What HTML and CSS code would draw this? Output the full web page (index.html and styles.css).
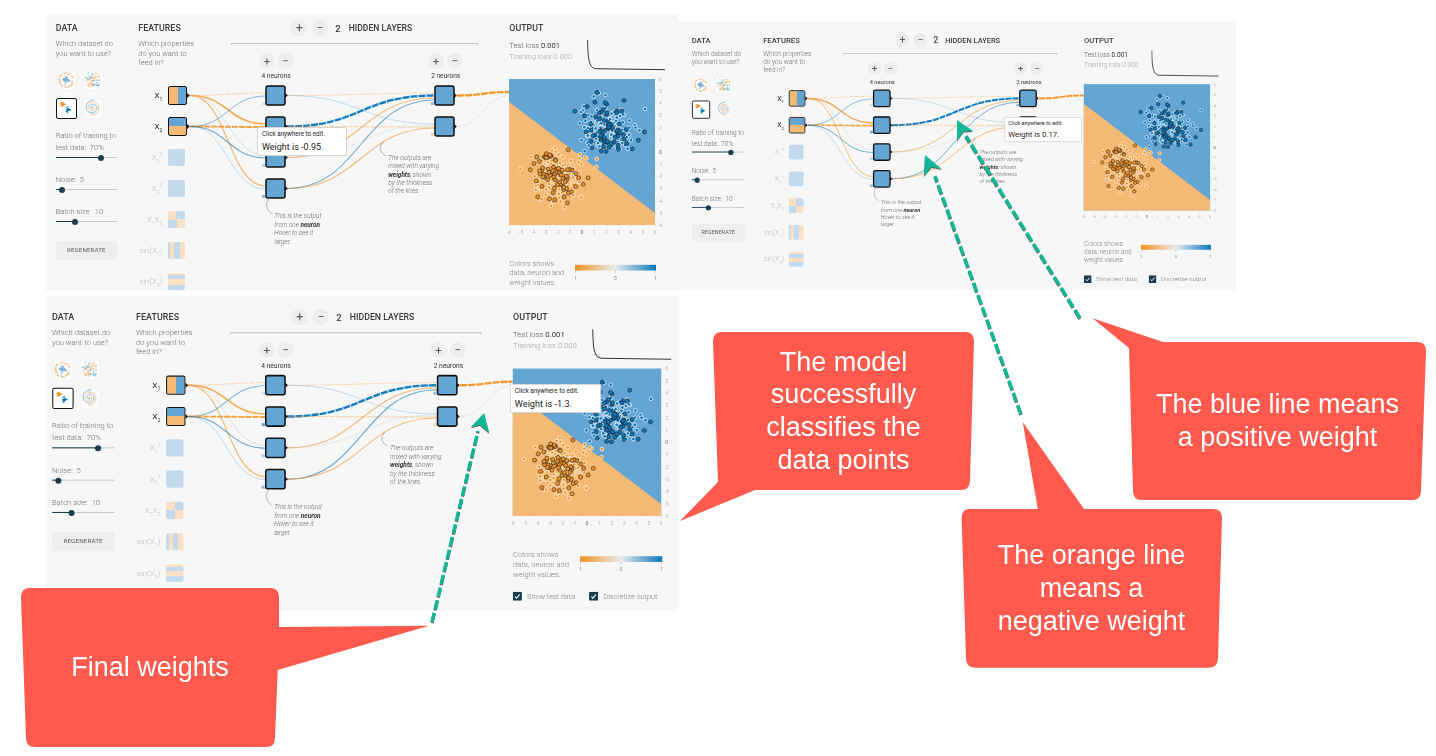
FILE: index.html
```html
<!DOCTYPE html>
<html lang="en">
<head>
<meta charset="utf-8">
<title>Neural network playground annotated</title>
<link rel="stylesheet" href="styles.css">
</head>
<body>
<main class="slide">
  <section class="panel panel-a" data-tip-small="Click anywhere to edit." data-tip="Weight is -0.95."></section>
  <section class="panel panel-c" data-tip-small="Click anywhere to edit." data-tip="Weight is 0.17."></section>
  <section class="panel panel-b" data-tip-small="Click anywhere to edit." data-tip="Weight is -1.3."></section>

  <svg class="art" viewBox="0 0 1436 756" width="1436" height="756" aria-hidden="true">
    <g class="bubbles">
      <path d="M722 332H965Q974 332 974 341L970 481Q969.5 490 961 490H755L680 521L718 482L713 341Q713 332 722 332Z"/>
      <path d="M1163 342H1417Q1426 342 1426 351L1421 491Q1421 500 1412 500H1142Q1133 500 1133 491L1129 348L1092.6 318.3Z"/>
      <path d="M1084 509H1213Q1222 509 1222 518L1218 658Q1218 667.7 1209 667.7H975Q966 667.7 966 658L961.6 518Q961.6 509 970 509H1037.8L1022.7 422Z"/>
      <path d="M30 588H270Q279 588 279 597V627L429 625.7L277.7 670L275 738Q275 747 266 747H35Q26 747 26 738L21 597Q21 588 30 588Z"/>
    </g>
    <g class="arrows">
      <line x1="1080" y1="318" x2="966" y2="136"/>
      <polygon points="957,120 973,131 963.5,131.5 957,141"/>
      <line x1="1021" y1="414" x2="935" y2="176"/>
      <polygon points="925,155 941.7,169 931.5,167 924,176"/>
      <line x1="432" y1="622" x2="478" y2="431"/>
      <polygon points="484,413 489.3,433 480,425 470.7,427.3"/>
    </g>
  </svg>

  <p class="callout callout-model">The model<br>successfully<br>classifies the<br>data points</p>
  <p class="callout callout-blue">The blue line means<br>a positive weight</p>
  <p class="callout callout-orange">The orange line<br>means a<br>negative weight</p>
  <p class="callout callout-final">Final weights</p>
</main>

<template id="board">
  <div class="board">
    <div class="col col-data">
      <h2 class="title">DATA</h2>
      <p class="desc">Which dataset do<br>you want to use?</p>
      <div class="thumbs">
        <svg class="thumb faded" viewBox="0 0 21 21" data-set="circle"></svg>
        <svg class="thumb faded" viewBox="0 0 21 21" data-set="xor"></svg>
        <svg class="thumb selected" viewBox="0 0 21 21" data-set="gauss"></svg>
        <svg class="thumb faded" viewBox="0 0 21 21" data-set="spiral"></svg>
      </div>
      <p class="param param-first">Ratio of training to<br>test data:&nbsp; 70%</p>
      <div class="slider s-ratio"><span class="fill"></span><span class="knob"></span></div>
      <p class="param">Noise:&nbsp; 5</p>
      <div class="slider s-noise"><span class="fill"></span><span class="knob"></span></div>
      <p class="param">Batch size:&nbsp; 10</p>
      <div class="slider s-batch"><span class="fill"></span><span class="knob"></span></div>
      <div class="regen">REGENERATE</div>
    </div>

    <div class="col col-features">
      <h2 class="title">FEATURES</h2>
      <p class="desc nowrap">Which properties<br>do you want to<br>feed in?</p>
      <ul class="features">
        <li class="feature on"><span class="flabel">X<sub>1</sub></span><span class="swatch sw-x1"></span></li>
        <li class="feature on"><span class="flabel">X<sub>2</sub></span><span class="swatch sw-x2"></span></li>
        <li class="feature"><span class="flabel">X<sub>1</sub><sup>2</sup></span><span class="swatch sw-sq"></span></li>
        <li class="feature"><span class="flabel">X<sub>2</sub><sup>2</sup></span><span class="swatch sw-sq"></span></li>
        <li class="feature"><span class="flabel">X<sub>1</sub>X<sub>2</sub></span><span class="swatch sw-xx"></span></li>
        <li class="feature"><span class="flabel">sin(X<sub>1</sub>)</span><span class="swatch sw-s1"></span></li>
        <li class="feature"><span class="flabel">sin(X<sub>2</sub>)</span><span class="swatch sw-s2"></span></li>
      </ul>
    </div>

    <div class="col col-net">
      <div class="layers">
        <span class="round">+</span>
        <span class="round">−</span>
        <strong class="count">2</strong>
        <span class="layers-name">HIDDEN LAYERS</span>
      </div>
      <div class="rule"></div>
      <svg class="net" viewBox="197 44 322 240" width="322" height="240">
        <g class="mini">
          <circle cx="277" cy="60.7" r="7.7"/><circle cx="295.5" cy="60.7" r="7.7"/>
          <circle cx="446" cy="60.7" r="7.7"/><circle cx="465" cy="60.7" r="7.7"/>
        </g>
        <g class="mini-sign">
          <text x="277" y="64.8">+</text><text x="295.5" y="64.8">−</text>
          <text x="446" y="64.8">+</text><text x="465" y="64.8">−</text>
        </g>
        <text class="neurons" x="286" y="78.4">4 neurons</text>
        <text class="neurons" x="455.7" y="78.4">2 neurons</text>
        <g class="links"></g>
        <g class="nodes"></g>
        <path class="pointer" d="M280 198Q272 206 281.5 214"/>
        <path class="pointer" d="M394 141Q385 150 396 156"/>
        <g class="note">
          <text x="284.3" y="218">This is the output</text>
          <text x="284.3" y="226.5">from one <tspan class="strong">neuron</tspan>.</text>
          <text x="284.3" y="235">Hover to see it</text>
          <text x="284.3" y="243.5">larger.</text>
          <text x="398.3" y="159.8">The outputs are</text>
          <text x="398.3" y="168.2">mixed with varying</text>
          <text x="398.3" y="176.6"><tspan class="strong">weights</tspan>, shown</text>
          <text x="398.3" y="185">by the thickness</text>
          <text x="398.3" y="193.4">of the lines.</text>
        </g>
      </svg>
    </div>

    <div class="col col-output">
      <h2 class="title">OUTPUT</h2>
      <div class="loss-row">
        <p class="loss"><span class="test">Test loss <b>0.001</b></span><br><span class="train">Training loss 0.000</span></p>
        <svg class="loss-chart" viewBox="597 40 78 31" width="78" height="31">
          <path d="M597.6 40C598 55 598 68.5 606 68.7L675 69.7"/>
        </svg>
      </div>
      <svg class="heat" viewBox="519 79 165 160" width="165" height="160">
        <rect class="h-blue" x="519" y="79" width="146" height="146"/>
        <polygon class="h-orange" points="519,101.7 665,213 665,225 519,225"/>
        <g class="axis"></g>
        <g class="dots"></g>
      </svg>
      <div class="legend">
        <p class="desc">Colors shows<br>data, neuron and<br>weight values.</p>
        <svg class="grad" viewBox="585 258.5 90 27" width="90" height="27">
          <defs>
            <linearGradient id="cmap"><stop offset="0" stop-color="#f59322"/><stop offset=".5" stop-color="#e8eaeb"/><stop offset="1" stop-color="#0877bd"/></linearGradient>
          </defs>
          <rect x="585" y="264.3" width="81" height="5.7" fill="url(#cmap)"/>
          <path class="gtick" d="M585.5 270v2M625.5 270v2M665.5 270v2"/>
          <text x="585" y="279">-1</text><text x="625.5" y="279">0</text><text x="665.5" y="279">1</text>
        </svg>
      </div>
      <div class="checks">
        <span class="check"><svg class="cbox" viewBox="0 0 9 9" width="9" height="9"><rect width="9" height="9" rx="1"/><path d="M2.3 4.9l1.5 1.4 3-3.6"/></svg>Show test data</span>
        <span class="check"><svg class="cbox" viewBox="0 0 9 9" width="9" height="9"><rect width="9" height="9" rx="1"/><path d="M2.3 4.9l1.5 1.4 3-3.6"/></svg>Discretize output</span>
      </div>
    </div>

    <div class="tip"><span class="tip-small"></span><span class="tip-big"></span></div>
  </div>
</template>
<script src="app.js"></script>
</body>
</html>
```

FILE: styles.css
```css
* { box-sizing: border-box; }
html, body { margin: 0; padding: 0; background: #fff; }
body { width: 1436px; height: 756px; overflow: hidden; font-family: Roboto, "Liberation Sans", sans-serif; }

.slide { position: relative; width: 1436px; height: 756px; }

/* panels sit on a free canvas, like pasted slides */
.panel { position: absolute; background: #f7f7f7; overflow: hidden; }
.panel-a { left: 46px; top: 14px; width: 632px; height: 277px; }
.panel-b { left: 46px; top: 296px; width: 632px; height: 315px; }
.panel-c { left: 678px; top: 21px; width: 558px; height: 269px; }

.board { position: relative; display: flex; width: 640px; height: 310px; transform-origin: 0 0; filter: blur(.3px); color: #555; }
.panel-b .board { transform: translate(-3.9px, 6.9px) scale(1.0166, 1.01); }
.panel-c .board { transform: translate(5.3px, 6.9px) scale(.865); }

.col { flex: none; }
.col-data { width: 92.3px; padding: 8px 0 0 9.7px; }
.col-features { width: 49px; padding-top: 8px; }
.col-net { width: 322px; padding-top: 6px; }
.col-output { width: 170px; padding-top: 8px; }

.title { margin: 0; font-size: 8.8px; line-height: 12px; font-weight: 500; color: #3a3a3a; letter-spacing: .05px; }
.desc { margin: 5px 0 0; font-size: 7.5px; line-height: 9.7px; font-weight: 300; color: #6e6e6e; }
.nowrap { white-space: nowrap; }

.thumbs { display: grid; grid-template-columns: 21px 21px; gap: 6.5px; margin-top: 11.6px; }
.thumb { display: block; width: 21px; height: 21px; background: #fff; border: 1px solid #eee; border-radius: 2px; }
.thumb.faded { opacity: .55; }
.thumb.selected { border: 1.6px solid #111; }

.param { margin: 12px 0 0; font-size: 7.5px; line-height: 12px; font-weight: 300; color: #6e6e6e; }
.param-first { margin-top: 11px; }

.slider { position: relative; width: 61px; height: 8px; }
.slider::before { content: ""; position: absolute; left: 0; right: 0; top: 3.5px; height: 1px; background: #c8c8c8; }
.fill { position: absolute; left: 0; top: 3.5px; height: 1px; background: #183d4e; }
.knob { position: absolute; top: 1px; width: 6px; height: 6px; margin-left: -3px; border-radius: 50%; background: #183d4e; }
.s-ratio .fill { width: 45.3px; } .s-ratio .knob { left: 45.3px; }
.s-noise .fill { width: 6.3px; } .s-noise .knob { left: 6.3px; }
.s-batch .fill { width: 19.3px; } .s-batch .knob { left: 19.3px; }

.regen { display: flex; align-items: center; justify-content: center; width: 61.3px; height: 19px; margin-top: 15px; border-radius: 1px; background: #eee; font-size: 6.2px; color: #5e5e5e; letter-spacing: .1px; }

.features { list-style: none; margin: 12px 0 0 -30px; padding: 0; }
.feature { display: flex; align-items: center; height: 31px; width: 79px; }
.flabel { flex: 1; padding-right: 6px; text-align: right; font-size: 8px; font-weight: 300; color: #bdbdbd; white-space: nowrap; }
.feature.on .flabel { color: #222; font-weight: 400; }
.flabel sub, .flabel sup { font-size: 5px; line-height: 0; }
.swatch { flex: none; width: 17px; height: 17px; margin-right: 2px; border-radius: 2px; background: #c3d9ed; }
.feature.on .swatch { width: 19px; height: 19px; margin-right: 0; border: 1.5px solid #111; }
.sw-x1 { background: linear-gradient(90deg, #f5b976 50%, #65a5d3 50%); }
.sw-x2 { background: linear-gradient(180deg, #65a5d3 48%, #f5b976 48%); }
.sw-xx { background: conic-gradient(#c3d9ed 25%, #fbe0c4 0 50%, #c3d9ed 0 75%, #fbe0c4 0); }
.sw-s1 { background: linear-gradient(90deg, #c3d9ed 0 14%, #fbe0c4 14% 38%, #c3d9ed 38% 68%, #fbe0c4 68%); }
.sw-s2 { background: linear-gradient(180deg, #fbe0c4 0 14%, #c3d9ed 14% 38%, #fbe0c4 38% 68%, #c3d9ed 68%); }

.layers { display: flex; align-items: center; height: 16px; padding-left: 104px; }
.round { display: flex; align-items: center; justify-content: center; width: 16px; height: 16px; margin-right: 5px; border-radius: 50%; background: #ededed; font-size: 12px; color: #555; }
.count { margin: 0 8px 0 2px; font-size: 9.5px; font-weight: 500; color: #3a3a3a; }
.layers-name { font-size: 8.6px; font-weight: 500; color: #3a3a3a; white-space: nowrap; }
.rule { width: 247px; height: 2px; margin: 7px 0 0 44px; border: 1px solid #c4c4c4; border-bottom: 0; }

.net { display: block; overflow: visible; margin-top: -1px; }
.mini circle { fill: #ededed; }
.mini-sign text { font-size: 11.5px; fill: #555; text-anchor: middle; }
.neurons { font-size: 6.6px; fill: #333; text-anchor: middle; }
.pointer { fill: none; stroke: #9a9a9a; stroke-width: .7; }
.note text { font-size: 6.4px; font-style: italic; font-weight: 300; fill: #666; }
.note .strong { font-weight: 700; fill: #333; }
.node { fill: #65a5d3; stroke: #111; stroke-width: 1.5; }

.loss-row { display: flex; margin-top: 5.5px; }
.loss { width: 78px; margin: 0; font-size: 7.6px; line-height: 11px; font-weight: 300; white-space: nowrap; }
.test { color: #555; } .test b { font-weight: 400; color: #333; }
.train { color: #a4a4a4; }
.loss-chart { flex: none; margin-top: .5px; }
.loss-chart path { fill: none; stroke: #333; stroke-width: 1; }

.heat { display: block; margin-top: 8px; overflow: visible; }
.h-blue { fill: #65a5d3; }
.h-orange { fill: #f5b976; }
.axis text { font-size: 5px; fill: #b5b5b5; text-anchor: middle; }
.axis .zero { fill: #666; }
.axis path { stroke: #ccc; stroke-width: .5; fill: none; }

.legend { display: flex; margin-top: 19.5px; }
.legend .desc { width: 66px; margin: 0; color: #808080; white-space: nowrap; }
.grad { flex: none; }
.grad text { font-size: 5px; fill: #888; text-anchor: middle; }
.gtick { stroke: #aaa; stroke-width: .6; fill: none; }

.checks { display: flex; margin-top: 12.5px; }
.check { display: flex; align-items: center; gap: 4.8px; width: 75px; height: 9px; font-size: 7.2px; font-weight: 300; color: #808080; white-space: nowrap; }
.cbox { flex: none; }
.cbox rect { fill: #183d4e; }
.cbox path { fill: none; stroke: #fff; stroke-width: 1.1; }

.tip { position: absolute; display: flex; flex-direction: column; justify-content: center; gap: 3.5px; width: 90px; height: 28.6px; padding: 0 4px; background: #fff; border: 1px solid #d4d4d4; border-radius: 2px; }
.panel-a .tip { left: 211px; top: 113px; }
.panel-b .tip { left: 460px; top: 80.3px; }
.panel-c .tip { left: 370.7px; top: 103px; }
.tip-small { font-size: 6.3px; line-height: 7px; color: #222; white-space: nowrap; }
.tip-big { font-size: 9px; line-height: 10px; color: #222; white-space: nowrap; }

.art { position: absolute; left: 0; top: 0; pointer-events: none; }
.bubbles path { fill: #ff5a4d; }
.arrows { filter: drop-shadow(.7px 1px .7px rgba(0, 0, 0, .6)); }
.arrows line { stroke: #10b898; stroke-width: 3.4; stroke-dasharray: 9.5 3.5; }
.arrows polygon { fill: #10b898; }

.callout { position: absolute; display: flex; align-items: center; justify-content: center; margin: 0; text-align: center; font-family: "Liberation Sans", Arial, sans-serif; font-size: 27px; line-height: 32.7px; color: #fff; }
.callout-model { left: 713px; top: 332px; width: 261px; height: 158px; }
.callout-blue { left: 1129px; top: 342px; width: 297px; height: 158px; }
.callout-orange { left: 961px; top: 509px; width: 261px; height: 159px; }
.callout-final { left: 21px; top: 588px; width: 258px; height: 159px; }
```

FILE: app.js
```js
// Seeded random numbers keep the scatter plots and dataset thumbnails stable.
function rng(seed) {
  let s = seed;
  return function () {
    s = (s * 1664525 + 1013904223) % 4294967296;
    return s / 4294967296;
  };
}
function gaussian(r) {
  return Math.sqrt(-2 * Math.log(r() + 1e-6)) * Math.cos(2 * Math.PI * r());
}

const ORANGE = '#f59322';
const BLUE = '#0877bd';

function link(x1, y1, x2, y2, color, width, opacity, dash) {
  const m = (x1 + x2) / 2;
  const d = `M${x1} ${y1}C${m} ${y1} ${m} ${y2} ${x2} ${y2}`;
  const dashAttr = dash ? ` stroke-dasharray="${dash}"` : '';
  return `<path d="${d}" fill="none" stroke="${color}" stroke-width="${width}" stroke-opacity="${opacity}"${dashAttr}/>`;
}

const GREY = '#a9bcc8';
const LINKS = [
  // inputs to first layer
  [200, 95.5, 276, 93, ORANGE, 1, .35, '5 1'],
  [200, 95.5, 276, 124, ORANGE, 1.7, .75],
  [200, 95.5, 276, 155, GREY, .8, .45],
  [200, 95.5, 276, 186, ORANGE, 1.1, .65],
  [200, 126.5, 276, 96, BLUE, 1, .5],
  [200, 126.5, 276, 127, ORANGE, 1.9, .85, '6 1'],
  [200, 126.5, 276, 158, BLUE, 1.1, .6],
  [200, 126.5, 276, 189, BLUE, .8, .28],
  // first layer to second layer
  [297, 95.5, 445, 93, ORANGE, 1, .3, '5 1'],
  [297, 95.5, 445, 124, BLUE, .9, .25],
  [297, 126.5, 445, 95.5, BLUE, 2.4, .95, '7 1'],
  [297, 126.5, 445, 127, ORANGE, 1, .4, '5 1'],
  [297, 157.5, 445, 98, ORANGE, 1.1, .6],
  [297, 157.5, 445, 125, GREY, .8, .3],
  [297, 188.5, 445, 100, BLUE, 1.1, .6],
  [297, 188.5, 445, 128, ORANGE, 1.1, .6],
  // second layer to output
  [467, 95.5, 519, 92, ORANGE, 2.3, .95, '7 1'],
  [467, 126.5, 519, 96, GREY, .8, .3]
];

const NODE_ROWS = [
  [276, 86, '#d9dde0', 272, 102],
  [276, 117, '#65a5d3', 272, 133],
  [276, 148, '#b6d0e6', 272, 164],
  [276, 179, '#8fbbdc', 272, 195],
  [445, 86, '#8fbbdc', 441, 102],
  [445, 117, '#f5d2ac', 441, 133]
];

function marker(x, y) {
  return `<polygon points="${x},${y - 2.4} ${x + 2.8},${y} ${x},${y + 2.4}" fill="#111"/>`;
}

function nodesMarkup() {
  let out = marker(197, 95.5) + marker(197, 126.5);
  for (const [x, y, bias, bx, by] of NODE_ROWS) {
    out += `<rect x="${bx}" y="${by}" width="3" height="3" fill="${bias}"/>`;
    out += `<rect class="node" x="${x}" y="${y}" width="19" height="19" rx="2"/>`;
    out += marker(x + 19, y + 9.5);
  }
  return out;
}

function dotsMarkup() {
  const r = rng(7);
  let train = '';
  let test = '';
  const clusters = [[616, 128, BLUE], [567.7, 176, ORANGE]];
  for (const [cx, cy, color] of clusters) {
    for (let i = 0; i < 210; i++) {
      const x = (cx + gaussian(r) * 12.5).toFixed(1);
      const y = (cy + gaussian(r) * 12.5).toFixed(1);
      if (i % 3 === 0) {
        test += `<circle cx="${x}" cy="${y}" r="2" fill="${color}" stroke="#222" stroke-width=".6"/>`;
      } else {
        train += `<circle cx="${x}" cy="${y}" r="1.8" fill="${color}" stroke="#fff" stroke-width=".7"/>`;
      }
    }
  }
  return train + test;
}

function axisMarkup() {
  let out = '';
  for (let v = -6; v <= 6; v++) {
    const px = 519 + (v + 6) * 146 / 12;
    const py = 79 + (6 - v) * 146 / 12;
    const cls = v === 0 ? ' class="zero"' : '';
    out += `<text x="${px.toFixed(1)}" y="233.8"${cls}>${v}</text>`;
    out += `<text x="670.5" y="${(py + 1.8).toFixed(1)}"${cls}>${v}</text>`;
    out += `<path d="M${px.toFixed(1)} 225v1.6M665 ${py.toFixed(1)}h1.6"/>`;
  }
  return out;
}

function thumbMarkup(kind) {
  const r = rng(kind.length * 97 + 11);
  let out = '';
  const dot = (x, y, c) => `<circle cx="${x.toFixed(1)}" cy="${y.toFixed(1)}" r=".75" fill="${c}"/>`;
  if (kind === 'circle') {
    for (let i = 0; i < 45; i++) {
      const a = r() * 6.283;
      const rad = 6.8 + r() * 1.6;
      out += dot(10 + Math.cos(a) * rad, 10 + Math.sin(a) * rad, ORANGE);
      out += dot(10 + gaussian(r) * 1.8, 10 + gaussian(r) * 1.8, BLUE);
    }
  } else if (kind === 'xor') {
    for (let i = 0; i < 70; i++) {
      const x = 2 + r() * 15;
      const y = 2 + r() * 15;
      out += dot(x, y, (x - 9.5) * (y - 9.5) > 0 ? BLUE : ORANGE);
    }
  } else if (kind === 'gauss') {
    for (let i = 0; i < 26; i++) {
      out += dot(6.2 + gaussian(r) * 1.3, 6.2 + gaussian(r) * 1.1, ORANGE);
      out += dot(12.2 + gaussian(r) * 1.2, 12.2 + gaussian(r) * 1.1, BLUE);
    }
  } else {
    let a = '';
    let b = '';
    for (let t = 0; t < 60; t++) {
      const ang = t * .19;
      const rad = t * .14;
      a += `${t ? 'L' : 'M'}${(9.5 + Math.cos(ang) * rad).toFixed(1)} ${(9.5 + Math.sin(ang) * rad).toFixed(1)}`;
      b += `${t ? 'L' : 'M'}${(9.5 - Math.cos(ang) * rad).toFixed(1)} ${(9.5 - Math.sin(ang) * rad).toFixed(1)}`;
    }
    out = `<path d="${a}" fill="none" stroke="${BLUE}" stroke-width="1"/><path d="${b}" fill="none" stroke="${ORANGE}" stroke-width="1"/>`;
  }
  return out;
}

const template = document.getElementById('board');
const linkMarkup = LINKS.map(l => link(...l)).join('');
const nodeMarkup = nodesMarkup();
const dotMarkup = dotsMarkup();
const tickMarkup = axisMarkup();

document.querySelectorAll('.panel').forEach(panel => {
  const board = template.content.cloneNode(true);
  board.querySelector('.links').innerHTML = linkMarkup;
  board.querySelector('.nodes').innerHTML = nodeMarkup;
  board.querySelector('.dots').innerHTML = dotMarkup;
  board.querySelector('.axis').innerHTML = tickMarkup;
  board.querySelectorAll('.thumb').forEach(t => { t.innerHTML = thumbMarkup(t.dataset.set); });
  board.querySelector('.tip-small').textContent = panel.dataset.tipSmall;
  board.querySelector('.tip-big').textContent = panel.dataset.tip;
  panel.appendChild(board);
});
```
